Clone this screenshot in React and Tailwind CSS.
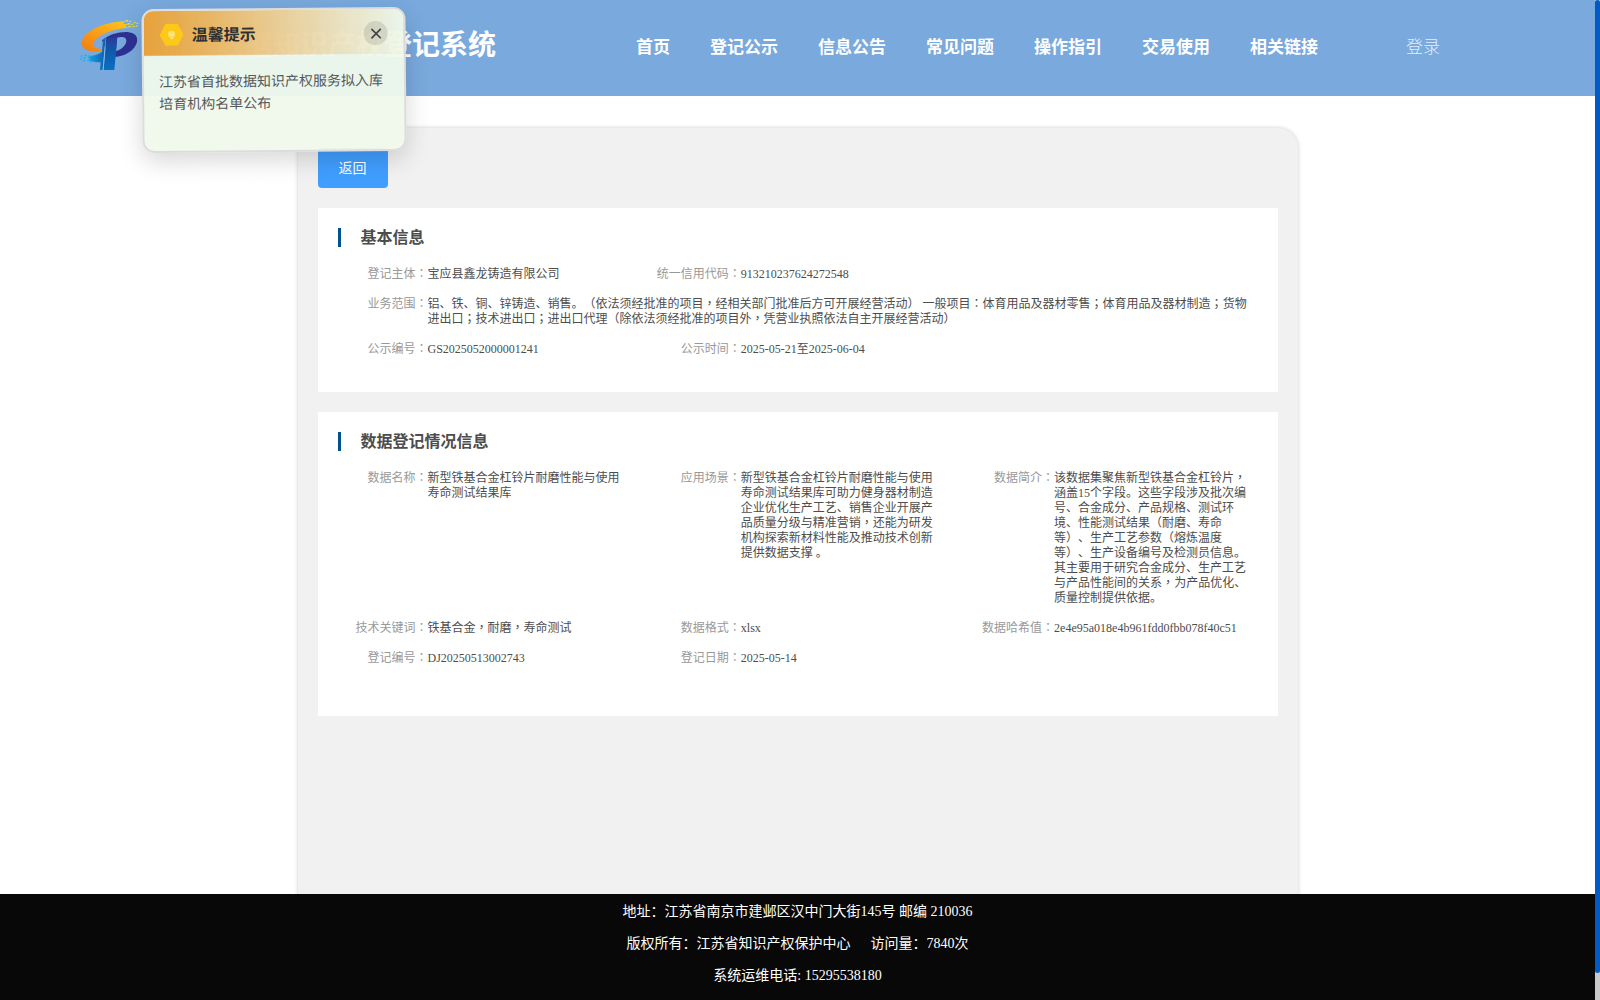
import React from "react";

const NAV = ["首页", "登记公示", "信息公告", "常见问题", "操作指引", "交易使用", "相关链接"];

// Full-width marks that are drawn in the middle of their cell.
function Mixed({ text }) {
  return text.split(/([，；：])/).map((part, i) =>
    /^[，；：]$/.test(part) ? (
      <span key={i} lang="zh-TW" className="font-['Noto_Sans_CJK_TC',sans-serif] leading-[0]">{part}</span>
    ) : (
      part
    )
  );
}

function Field({ label, lines, wide }) {
  return (
    <div className={wide ? "col-span-3 flex" : "flex"}>
      <div className="w-[99.5px] shrink-0 text-right text-[#999999]">
        <Mixed text={label + "："} />
      </div>
      <div className="text-[#4d4d4d]">
        {lines.map((l, i) => (
          <div key={i}><Mixed text={l} /></div>
        ))}
      </div>
    </div>
  );
}

function Panel({ title, className, children }) {
  return (
    <section className={className}>
      <div className="flex h-[19px] items-center">
        <div className="h-[19px] w-[3px] bg-[#00528f]" />
        <h2 className="ml-[20px] text-[16px] leading-[19px] font-bold text-[#4d4d4d]">{title}</h2>
      </div>
      <div className="mt-[20px] -ml-[9.5px] grid grid-cols-[313.3px_313.3px_313.3px] gap-y-[15px] text-[12px] leading-[15px] whitespace-nowrap">
        {children}
      </div>
    </section>
  );
}

function Logo() {
  return (
    <svg className="h-[60px] w-[70px] shrink-0" viewBox="48 42 210 180">
      <defs>
        <linearGradient id="ring" x1="0" y1="1" x2="1" y2="0">
          <stop offset="0" stopColor="#f07c10" />
          <stop offset="0.5" stopColor="#fb9f18" />
          <stop offset="1" stopColor="#fccb1c" />
        </linearGradient>
        <linearGradient id="stem" x1="0" y1="0" x2="0" y2="1">
          <stop offset="0" stopColor="#2a3c98" />
          <stop offset="0.45" stopColor="#0d5cae" />
          <stop offset="1" stopColor="#0a6fc0" />
        </linearGradient>
        <linearGradient id="wing" x1="0" y1="0" x2="1" y2="0">
          <stop offset="0" stopColor="#1ba6e6" />
          <stop offset="1" stopColor="#0b62b2" />
        </linearGradient>
      </defs>
      <path d="M124 153 C94 158 66 152 65 130 C66 96 128 66 194 64 L190 71 L203 73 L197 80 L208 83 C163 86 110 103 100 130 C99 141 108 146 124 147 Z" fill="url(#ring)" />
      <path d="M126 121 C146 103 176 95 202 96 C224 98 235 109 231 126 C225 151 196 169 163 171 L165 154 C184 150 197 138 199 124 C200 112 188 109 171 113 L168 150 L140 150 Z" fill="#2e3192" />
      <path d="M139 115 L172 112 L163 210 L131 210 Z" fill="url(#stem)" />
      <path d="M129 119 L136 115 L128 210 L120 210 L122 187 C106 187 92 184 82 180 L92 177 L82 173 L94 167 C108 165 119 161 126 155 Z" fill="url(#wing)" />
      <path d="M137 115 L138.5 115 L130.5 210 L128 210 Z" fill="#8fbce6" />
      <g fill="#e4d738">
        <path d="M197 60h8l-2 5h-8zM208 62h7l-2 4h-7zM222 66h6l-2 4h-6zM203 69h8l-2 5h-8zM214 71h7l-2 4h-7zM230 68h6l-2 4h-6zM206 77h8l-2 5h-8zM218 78h7l-2 4h-7zM228 76h6l-2 4h-6z" />
      </g>
      <g fill="#24b2ea">
        <path d="M74 164h8l-2 5h-8zM63 166h6l-2 4h-6zM71 172h8l-2 5h-8zM61 175h6l-2 4h-6zM83 180h8l-2 4h-8zM70 180h7l-2 4h-7zM91 184h7l-2 4h-7zM85 166h6l-2 4h-6z" />
      </g>
    </svg>
  );
}

function Notice() {
  return (
    <div className="absolute top-[8px] left-[141.5px] h-[144px] w-[264px] -rotate-[0.5deg] overflow-visible rounded-[12px] border-2 border-[#dcdcdc] bg-[#f0f9eb]/95 shadow-[0_8px_24px_rgba(0,0,0,0.16)]">
      <div className="flex h-[45px] items-center rounded-t-[10px] border-b border-[#e4e7ed]/40 bg-[linear-gradient(90deg,#e6a23c_0%,rgba(230,162,60,0.9)_12%,rgba(230,162,60,0.42)_58%,rgba(230,162,60,0)_100%)] px-[16px] pt-[4px]">
        <div className="flex h-[22px] w-[24px] items-center justify-center bg-[#fdc916] [clip-path:polygon(25%_0%,75%_0%,100%_50%,75%_100%,25%_100%,0%_50%)]">
          <svg className="h-[10px] w-[10px]" viewBox="0 0 10 10">
            <circle cx="5" cy="4.4" r="3.6" fill="#fde06a" />
            <path d="M3.5 4 L5 5.2 L6.5 4 M3.6 8.7 H6.4" stroke="#fff0b0" strokeWidth="0.8" fill="none" />
          </svg>
        </div>
        <div className="ml-[8px] pt-px text-[16px] leading-[20px] font-bold text-[#303133]">温馨提示</div>
        <div className="ml-auto flex h-[24px] w-[24px] items-center justify-center rounded-full bg-black/10">
          <svg className="h-[11px] w-[11px]" viewBox="0 0 11 11">
            <path d="M0.8 0.8 L10.2 10.2 M10.2 0.8 L0.8 10.2" stroke="#444444" strokeWidth="1.7" />
          </svg>
        </div>
      </div>
      <div className="px-[15px] pt-[16px] text-[14px] leading-[22.4px] whitespace-nowrap text-[#55585c]">
        <div>江苏省首批数据知识产权服务拟入库</div>
        <div>培育机构名单公布</div>
      </div>
    </div>
  );
}

export default function App() {
  return (
    <div lang="zh-CN" className="relative flex h-[1000px] w-[1600px] overflow-hidden bg-white font-['Liberation_Serif','Noto_Sans_CJK_SC',sans-serif] [text-spacing-trim:space-all]">
      <div className="flex w-[1595px] flex-col">
        <header className="flex h-[96px] shrink-0 bg-[#79a9dd] pl-[76px] whitespace-nowrap text-white">
          <div className="mt-[14px] w-[84px]"><Logo /></div>
          <h1 className="mt-[26px] w-[476px] text-[28px] leading-[40px] font-bold">江苏数据知识产权登记系统</h1>
          <nav className="mt-[36px] flex gap-[40px] text-[17px] leading-[24px] font-bold">
            {NAV.map((n) => (
              <span key={n}>{n}</span>
            ))}
          </nav>
          <span className="mt-[36px] ml-[88px] text-[17px] leading-[24px] font-light text-white/80">登录</span>
        </header>
        <main className="flex min-h-0 flex-1 justify-center overflow-hidden">
          <div className="mt-[32px] h-[900px] w-[1000px] rounded-[20px] bg-[#f1f1f1] px-[20px] pt-[20px] shadow-[0_0_4px_rgba(0,0,0,0.2)]">
            <button className="block h-[40px] w-[70px] rounded-[4px] bg-[#409eff] text-[14px] text-white">返回</button>
            <Panel title="基本信息" className="mt-[20px] h-[184px] bg-white px-[20px] pt-[20px]">
              <Field label="登记主体" lines={["宝应县鑫龙铸造有限公司"]} />
              <Field label="统一信用代码" lines={["913210237624272548"]} />
              <div />
              <Field
                wide
                label="业务范围"
                lines={[
                  "铝、铁、铜、锌铸造、销售。（依法须经批准的项目，经相关部门批准后方可开展经营活动） 一般项目：体育用品及器材零售；体育用品及器材制造；货物",
                  "进出口；技术进出口；进出口代理（除依法须经批准的项目外，凭营业执照依法自主开展经营活动）",
                ]}
              />
              <Field label="公示编号" lines={["GS2025052000001241"]} />
              <Field label="公示时间" lines={["2025-05-21至2025-06-04"]} />
            </Panel>
            <Panel title="数据登记情况信息" className="mt-[20px] h-[304px] bg-white px-[20px] pt-[20px]">
              <Field label="数据名称" lines={["新型铁基合金杠铃片耐磨性能与使用", "寿命测试结果库"]} />
              <Field
                label="应用场景"
                lines={[
                  "新型铁基合金杠铃片耐磨性能与使用",
                  "寿命测试结果库可助力健身器材制造",
                  "企业优化生产工艺、销售企业开展产",
                  "品质量分级与精准营销，还能为研发",
                  "机构探索新材料性能及推动技术创新",
                  "提供数据支撑 。",
                ]}
              />
              <Field
                label="数据简介"
                lines={[
                  "该数据集聚焦新型铁基合金杠铃片，",
                  "涵盖15个字段。这些字段涉及批次编",
                  "号、合金成分、产品规格、测试环",
                  "境、性能测试结果（耐磨、寿命",
                  "等）、生产工艺参数（熔炼温度",
                  "等）、生产设备编号及检测员信息。",
                  "其主要用于研究合金成分、生产工艺",
                  "与产品性能间的关系，为产品优化、",
                  "质量控制提供依据。",
                ]}
              />
              <Field label="技术关键词" lines={["铁基合金，耐磨，寿命测试"]} />
              <Field label="数据格式" lines={["xlsx"]} />
              <Field label="数据哈希值" lines={["2e4e95a018e4b961fdd0fbb078f40c51"]} />
              <Field label="登记编号" lines={["DJ20250513002743"]} />
              <Field label="登记日期" lines={["2025-05-14"]} />
            </Panel>
          </div>
        </main>
        <footer className="flex h-[106px] shrink-0 flex-col items-center bg-[#080808] pt-[2px] text-[14px] leading-[32px] whitespace-nowrap text-white">
          <div>地址：江苏省南京市建邺区汉中门大街145号 邮编 210036</div>
          <div>版权所有：江苏省知识产权保护中心<span className="ml-[20px]">访问量：7840次</span></div>
          <div>系统运维电话: 15295538180</div>
        </footer>
      </div>
      <div className="w-[5px] bg-[#c9c9c9]">
        <div className="h-[973px] rounded-[3px] bg-[#005bc4]" />
      </div>
      <Notice />
    </div>
  );
}
